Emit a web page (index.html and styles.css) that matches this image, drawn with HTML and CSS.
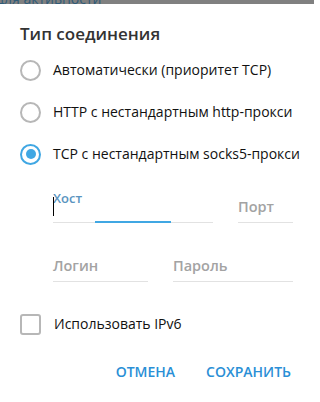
FILE: index.html
```html
<!DOCTYPE html>
<html lang="ru">
<head>
<meta charset="utf-8">
<link rel="stylesheet" href="styles.css">
</head>
<body>
<div class="topbar"><span class="topbar-text">для активности</span></div>
<div class="dialog">
  <div class="title">Тип соединения</div>
  <div class="options">
    <label class="radio-row"><span class="radio"></span><span class="radio-text">Автоматически (приоритет TCP)</span></label>
    <label class="radio-row"><span class="radio"></span><span class="radio-text">HTTP с нестандартным http-прокси</span></label>
    <label class="radio-row"><span class="radio checked"></span><span class="radio-text">TCP с нестандартным socks5-прокси</span></label>
  </div>
  <div class="fields">
    <div class="field-row first">
      <div class="field host active"><span class="float-label">Хост</span><span class="cursor"></span><span class="ph">&nbsp;</span></div>
      <div class="field port"><span class="ph">Порт</span></div>
    </div>
    <div class="field-row second">
      <div class="field login"><span class="ph">Логин</span></div>
      <div class="field pass"><span class="ph">Пароль</span></div>
    </div>
  </div>
  <label class="check-row"><span class="checkbox"></span><span class="check-text">Использовать IPv6</span></label>
  <div class="buttons">
    <span class="btn">ОТМЕНА</span>
    <span class="btn">СОХРАНИТЬ</span>
  </div>
</div>
</body>
</html>
```
FILE: styles.css
```css
* { box-sizing: border-box; }
html, body { margin: 0; padding: 0; background: #fff; }
body {
  font-family: "Open Sans", "Noto Sans", sans-serif;
  width: 314px;
  height: 402px;
  overflow: hidden;
}
.topbar {
  height: 4px;
  background: #808080;
  overflow: hidden;
  white-space: nowrap;
}
.topbar-text {
  display: block;
  margin-top: -11px;
  margin-left: -4px;
  font-size: 14px;
  line-height: 19px;
  color: #2f5b78;
}
.dialog {
  padding: 0 20px;
}
.title {
  margin-top: 18px;
  font-size: 17px;
  line-height: 23px;
  font-weight: 600;
  color: #333;
}
.options {
  margin-top: 4px;
  display: flex;
  flex-direction: column;
}
.radio-row {
  height: 42px;
  display: flex;
  align-items: center;
  white-space: nowrap;
}
.radio {
  width: 21px;
  height: 21px;
  border: 2px solid #b7b7b7;
  border-radius: 50%;
  flex: none;
  position: relative;
}
.radio.checked {
  border-color: #40a7e3;
}
.radio.checked::after {
  content: "";
  position: absolute;
  left: 3.5px;
  top: 3.5px;
  width: 10px;
  height: 10px;
  border-radius: 50%;
  background: #40a7e3;
}
.radio-text {
  margin-left: 12px;
  font-size: 14px;
  line-height: 20px;
  color: #111;
}
.fields {
  margin-top: 22px;
  padding-left: 33px;
  display: flex;
  flex-direction: column;
  gap: 33px;
}
.field-row {
  display: flex;
  gap: 25px;
}
.field {
  position: relative;
  border-bottom: 1px solid #e2e2e2;
  padding-bottom: 5px;
}
.host { width: 160px; }
.port { width: 55px; }
.login { width: 95px; }
.pass { width: 120px; }
.ph {
  display: block;
  font-size: 14.5px;
  line-height: 20px;
  font-weight: 600;
  color: #a3a3a3;
}
.float-label {
  position: absolute;
  left: 0;
  top: -8px;
  font-size: 13px;
  line-height: 18px;
  font-weight: 600;
  color: #5a94c0;
}
.cursor {
  position: absolute;
  left: 0;
  top: 0;
  width: 1px;
  height: 19px;
  background: #000;
}
.host.active::after {
  content: "";
  position: absolute;
  left: 42px;
  width: 76px;
  bottom: -1px;
  height: 2px;
  background: #40a7e3;
}
.check-row {
  margin-top: 22px;
  height: 40px;
  display: flex;
  align-items: center;
}
.checkbox {
  width: 21px;
  height: 21px;
  border: 2px solid #b7b7b7;
  border-radius: 3px;
  flex: none;
}
.check-text {
  margin-left: 13px;
  font-size: 14px;
  line-height: 20px;
  color: #111;
}
.buttons {
  margin-top: 18px;
  display: flex;
  justify-content: flex-end;
  gap: 31px;
  padding-right: 3px;
}
.btn {
  font-size: 14px;
  line-height: 20px;
  font-weight: 600;
  color: #2a8fd6;
}
```
